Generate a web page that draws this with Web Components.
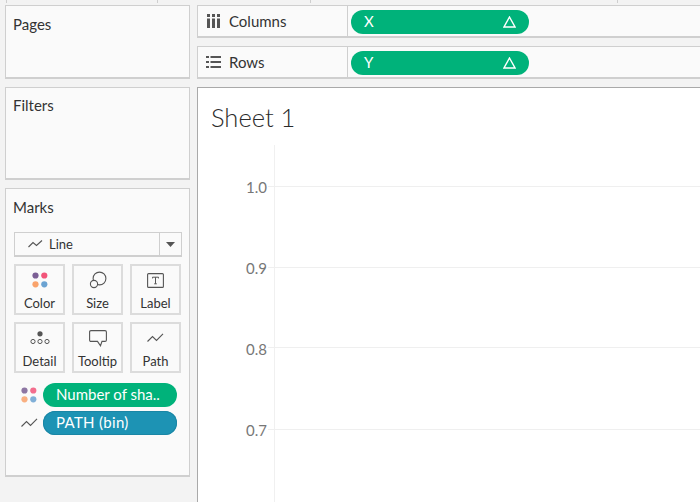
<!DOCTYPE html>
<html><head><meta charset="utf-8"><style>
html,body{margin:0;padding:0;background:#f3f3f3;width:700px;height:502px;overflow:hidden}
body{font-family:Lato,"Open Sans",sans-serif;color:#333}
</style></head><body>
<template id="t-card"><style>
:host{display:block;box-sizing:border-box;background:#fafafa;border:1px solid #cfcfcf;border-bottom-width:2px;padding:8px 7px 0 8px}
.t{font-size:15px;line-height:20px;color:#333;margin-left:-1px}
</style><div class="t"><slot name="title"></slot></div><slot></slot></template>

<template id="t-pill"><style>
:host{display:flex;align-items:center;justify-content:space-between;box-sizing:border-box;height:24px;border-radius:12px;background:var(--c,#00b27a);color:#fff;font-size:15px;padding:0 13px 2px;white-space:nowrap;letter-spacing:var(--ls,0);font-weight:400}
::slotted(svg){margin-top:2px}
</style><slot></slot><slot name="end"></slot></template>

<template id="t-btn"><style>
:host{display:flex;flex-direction:column;align-items:center;box-sizing:border-box;height:51px;background:#fafafa;border:2px solid #dcdcdc;font-size:13px;color:#333;padding-top:2px}
.i{height:24px;display:flex;align-items:center;justify-content:center}
.l{line-height:16px;margin-top:3px}
</style><div class="i"><slot name="icon"></slot></div><div class="l"><slot></slot></div></template>

<template id="t-shelf"><style>
:host{display:grid;grid-template-columns:150px 1fr;box-sizing:border-box;height:33px;background:#fafafa;border:1px solid #cfcfcf;border-bottom-width:2px;border-right:0;font-size:15px;color:#333}
.h{display:flex;align-items:center;gap:8px;padding-left:8px;border-right:1px solid #cfcfcf}
.b{padding:4px 0 0 3px}
</style><div class="h"><slot name="icon"></slot><slot name="label"></slot></div><div class="b"><slot></slot></div></template>

<template id="t-chart"><style>
:host{display:block;box-sizing:border-box;background:#fff;border:1px solid #a9a9a9;border-right:0;border-bottom:0;overflow:hidden}
.title{font-size:25.5px;font-weight:300;line-height:32px;padding:13px 0 0 13px;color:#2b2b2b;height:44px;box-sizing:content-box}
.plot{display:grid;grid-template-columns:77px 1fr;height:360px}
.axis{border-right:1px solid #f0f0f0;display:flex;flex-direction:column;padding-top:27px}
.grid{display:flex;flex-direction:column;padding-top:41px;margin-left:-7px}
.grid i{display:block;flex:none;height:81px;box-sizing:border-box;border-top:1px solid #efefef}
.grid i:nth-child(2){height:80px}
.grid i:nth-child(3){height:82px}
</style><div class="title"><slot name="title"></slot></div><div class="plot"><div class="axis"><slot></slot></div><div class="grid"><i></i><i></i><i></i><i></i></div></div></template>

<template id="t-tick"><style>
:host{display:block;flex:none;height:81px;box-sizing:border-box;text-align:right;padding-right:7px;font-size:15px;line-height:30px;color:#777}
</style><slot></slot></template>

<template id="t-select"><style>
:host{display:grid;grid-template-columns:1fr 22px;box-sizing:border-box;height:25px;background:#fafafa;border:1px solid #cfcfcf;border-bottom-width:2px;font-size:13px;color:#333}
.a{display:flex;align-items:center;gap:6px;padding-left:13px}
.b{display:flex;align-items:center;justify-content:center;border-left:1px solid #cfcfcf}
</style><div class="a"><slot name="icon"></slot><slot></slot></div><div class="b"><slot name="arrow"></slot></div></template>

<template id="t-app"><style>
:host{display:grid;grid-template-columns:185px 1fr;column-gap:7px;box-sizing:border-box;width:700px;height:502px;padding:5px 0 0 5px;position:relative}
.l{display:flex;flex-direction:column;gap:8px;height:472px}
.r{display:flex;flex-direction:column;gap:8px;height:497px}
.tick{position:absolute;top:0;width:1px;height:3px;background:#cfcfcf}
</style><div class="l"><slot name="left"></slot></div><div class="r"><slot name="right"></slot></div>
<span class="tick" style="left:6px"></span><span class="tick" style="left:157px"></span><span class="tick" style="left:310px"></span><span class="tick" style="left:617px"></span></template>

<template id="t-marks"><style>
:host{display:block;margin-top:15px}
.g{display:grid;grid-template-columns:51px 51px 51px;column-gap:7px;row-gap:7px;margin-top:7px}
.r{display:grid;grid-template-columns:29px 134px;align-items:center;margin-top:10px;row-gap:4px}
</style><div><slot name="select"></slot></div><div class="g"><slot name="btn"></slot></div><div class="r"><slot name="pills"></slot></div></template>

<template id="t-row"><style>:host{display:contents}</style><slot></slot></template>

<tb-app>
 <tb-card slot="left" style="height:74px"><span slot="title">Pages</span></tb-card>
 <tb-card slot="left" style="height:93px;padding-top:7px"><span slot="title">Filters</span></tb-card>
 <tb-card slot="left" style="height:289px"><span slot="title">Marks</span>
  <tb-marks>
   <tb-select slot="select">
    <svg slot="icon" width="15" height="10" viewBox="0 0 15 10" fill="none" stroke="#555" stroke-width="1.1"><path d="M.5 8 L5 3.5 L8.5 6.5 L14 1.5"/></svg>Line
    <svg slot="arrow" width="9" height="5" viewBox="0 0 9 5"><path d="M0 0H9L4.5 5Z" fill="#555"/></svg>
   </tb-select>
   <tb-btn slot="btn">
    <svg slot="icon" width="16" height="16" viewBox="0 0 16 16" style="margin-top:-1px"><circle cx="3.5" cy="3.5" r="3.1" fill="#7b5f95"/><circle cx="12.3" cy="3.5" r="3.1" fill="#f2557a"/><circle cx="3.5" cy="12.3" r="3.1" fill="#f9a36c"/><circle cx="12.3" cy="12.3" r="3.1" fill="#6ba3d2"/></svg>Color</tb-btn>
   <tb-btn slot="btn">
    <svg slot="icon" width="18" height="18" viewBox="0 0 18 18" fill="none" stroke="#555" stroke-width="1.1"><circle cx="10.5" cy="7.5" r="6.4"/><circle cx="5" cy="13" r="3.6" fill="#fafafa"/></svg>Size</tb-btn>
   <tb-btn slot="btn">
    <svg slot="icon" width="17" height="15" viewBox="0 0 17 15" fill="none"><rect x=".6" y=".6" width="15.8" height="13.8" rx="1" stroke="#555" stroke-width="1.1"/><path d="M5.5 4.2H11.5M8.5 4.2V10.8M7.2 10.8H9.8M5.5 4.2V5.4M11.5 4.2V5.4" stroke="#555" stroke-width="1"/></svg>Label</tb-btn>
   <tb-btn slot="btn">
    <svg slot="icon" width="20" height="14" viewBox="0 0 20 14" fill="none" stroke="#555" stroke-width="1"><circle cx="10" cy="2.8" r="2.6" fill="#555" stroke="none"/><circle cx="3" cy="10.5" r="2.1"/><circle cx="10" cy="10.5" r="2.1"/><circle cx="17" cy="10.5" r="2.1"/></svg>Detail</tb-btn>
   <tb-btn slot="btn">
    <svg slot="icon" width="18" height="17" viewBox="0 0 18 17" fill="none" stroke="#555" stroke-width="1.1"><path d="M2 .6H16Q17.4 .6 17.4 2V10Q17.4 11.4 16 11.4H13L11.5 15.8L8.5 11.4H2Q.6 11.4 .6 10V2Q.6 .6 2 .6Z"/></svg>Tooltip</tb-btn>
   <tb-btn slot="btn">
    <svg slot="icon" width="17" height="11" viewBox="0 0 17 11" fill="none" stroke="#555" stroke-width="1.1"><path d="M.5 8.5L5.5 3.5L9.5 7.5L16 .8"/></svg>Path</tb-btn>
   <tb-row slot="pills">
    <svg width="16" height="16" viewBox="0 0 16 16" style="margin-left:7px;opacity:.85"><circle cx="3.5" cy="3.5" r="3.1" fill="#7b5f95"/><circle cx="12.3" cy="3.5" r="3.1" fill="#f2557a"/><circle cx="3.5" cy="12.3" r="3.1" fill="#f9a36c"/><circle cx="12.3" cy="12.3" r="3.1" fill="#6ba3d2"/></svg>
    <tb-pill>Number of sha..</tb-pill>
    <svg width="17" height="11" viewBox="0 0 17 11" fill="none" stroke="#555" stroke-width="1.1" style="margin-left:7px"><path d="M.5 8.5L5.5 3.5L9.5 7.5L16 .8"/></svg>
    <tb-pill style="--c:#1d93b4;--ls:.3px;box-shadow:inset 0 0 0 1px #1a86a5">PATH (bin)</tb-pill>
   </tb-row>
  </tb-marks>
 </tb-card>

 <tb-shelf slot="right">
  <svg slot="icon" width="13" height="14" viewBox="0 0 13 14" fill="#555" style="margin:0 1px"><rect x="0" y="0" width="3" height="3"/><rect x="5" y="0" width="3" height="3"/><rect x="10" y="0" width="3" height="3"/><rect x="0" y="4.5" width="3" height="9.5"/><rect x="5" y="4.5" width="3" height="9.5"/><rect x="10" y="4.5" width="3" height="9.5"/></svg>
  <span slot="label">Columns</span>
  <tb-pill style="width:178px">X<svg slot="end" width="13" height="12" viewBox="0 0 13 12" fill="none" stroke="#fff" stroke-width="1.4"><path d="M6.5 1L12 11H1Z"/></svg></tb-pill>
 </tb-shelf>
 <tb-shelf slot="right">
  <svg slot="icon" width="15" height="12" viewBox="0 0 15 12" fill="#555"><rect x="0" y="0" width="3" height="2"/><rect x="4.5" y="0" width="10.5" height="2"/><rect x="0" y="5" width="3" height="2"/><rect x="4.5" y="5" width="10.5" height="2"/><rect x="0" y="10" width="3" height="2"/><rect x="4.5" y="10" width="10.5" height="2"/></svg>
  <span slot="label">Rows</span>
  <tb-pill style="width:178px">Y<svg slot="end" width="13" height="12" viewBox="0 0 13 12" fill="none" stroke="#fff" stroke-width="1.4"><path d="M6.5 1L12 11H1Z"/></svg></tb-pill>
 </tb-shelf>
 <tb-chart slot="right" style="height:415px"><span slot="title">Sheet 1</span>
  <tb-tick>1.0</tb-tick><tb-tick>0.9</tb-tick><tb-tick>0.8</tb-tick><tb-tick>0.7</tb-tick>
 </tb-chart>
</tb-app>

<script>
function def(name,tpl){customElements.define(name,class extends HTMLElement{constructor(){super();this.attachShadow({mode:'open'}).appendChild(document.getElementById(tpl).content.cloneNode(true));}});}
[['tb-app','t-app'],['tb-card','t-card'],['tb-pill','t-pill'],['tb-btn','t-btn'],['tb-shelf','t-shelf'],['tb-chart','t-chart'],['tb-tick','t-tick'],['tb-select','t-select'],['tb-marks','t-marks'],['tb-row','t-row']].forEach(a=>def(a[0],a[1]));
</script>
</body></html>
